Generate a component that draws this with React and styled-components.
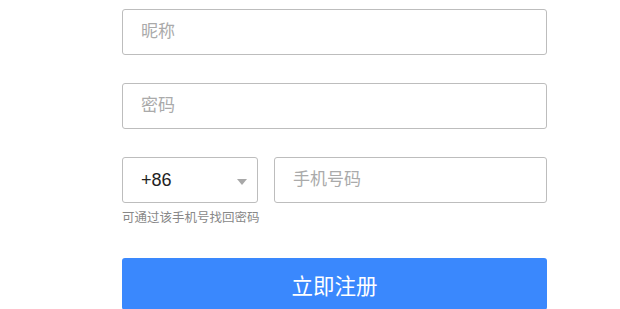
import React from "react";
import styled, { createGlobalStyle } from "styled-components";

const Global = createGlobalStyle`
  html, body { margin: 0; padding: 0; background: #fff; }
  body { font-family: "Liberation Sans", Arial, "Noto Sans CJK SC", sans-serif; }
  * { box-sizing: border-box; }
`;

const Form = styled.div`
  width: 425px;
  margin-left: 122px;
  padding-top: 9px;
  display: flex;
  flex-direction: column;
`;

const Input = styled.input`
  display: block;
  width: ${(p) => p.$width || "100%"};
  height: 46px;
  border: 1px solid #bdbdbd;
  border-radius: 3px;
  padding: 0 18px;
  font-size: 17px;
  font-family: "Liberation Sans", Arial, "Noto Sans CJK SC", sans-serif;
  color: #222;
  outline: none;
  margin-bottom: ${(p) => p.$mb || "28px"};
  &::placeholder { color: #aaa; }
`;

const Row = styled.div`
  display: flex;
  gap: 16px;
`;

const Select = styled.div`
  position: relative;
  width: 136px;
  flex: none;
  height: 46px;
  border: 1px solid #bdbdbd;
  border-radius: 3px;
  padding: 0 18px;
  display: flex;
  align-items: center;
  font-size: 18px;
  color: #222;
`;

const Arrow = styled.span`
  position: absolute;
  right: 10px;
  top: 21px;
  width: 0;
  height: 0;
  border-left: 5px solid transparent;
  border-right: 5px solid transparent;
  border-top: 6px solid #a8a8a8;
`;

const Hint = styled.div`
  margin-top: 6px;
  font-size: 12.5px;
  line-height: 16px;
  color: #888;
  font-family: "Noto Sans CJK SC", sans-serif;
`;

const Button = styled.button`
  margin-top: 33px;
  width: 100%;
  height: 52px;
  border: none;
  border-radius: 3px;
  background: #3a88fd;
  color: #fff;
  font-size: 21.5px;
  font-family: "Noto Sans CJK SC", sans-serif;
  cursor: pointer;
`;

export default function App() {
  return (
    <>
      <Global />
      <Form>
        <Input placeholder="昵称" />
        <Input type="password" placeholder="密码" />
        <Row>
          <Select>
            +86
            <Arrow />
          </Select>
          <Input placeholder="手机号码" $mb="0" />
        </Row>
        <Hint>可通过该手机号找回密码</Hint>
        <Button>立即注册</Button>
      </Form>
    </>
  );
}
